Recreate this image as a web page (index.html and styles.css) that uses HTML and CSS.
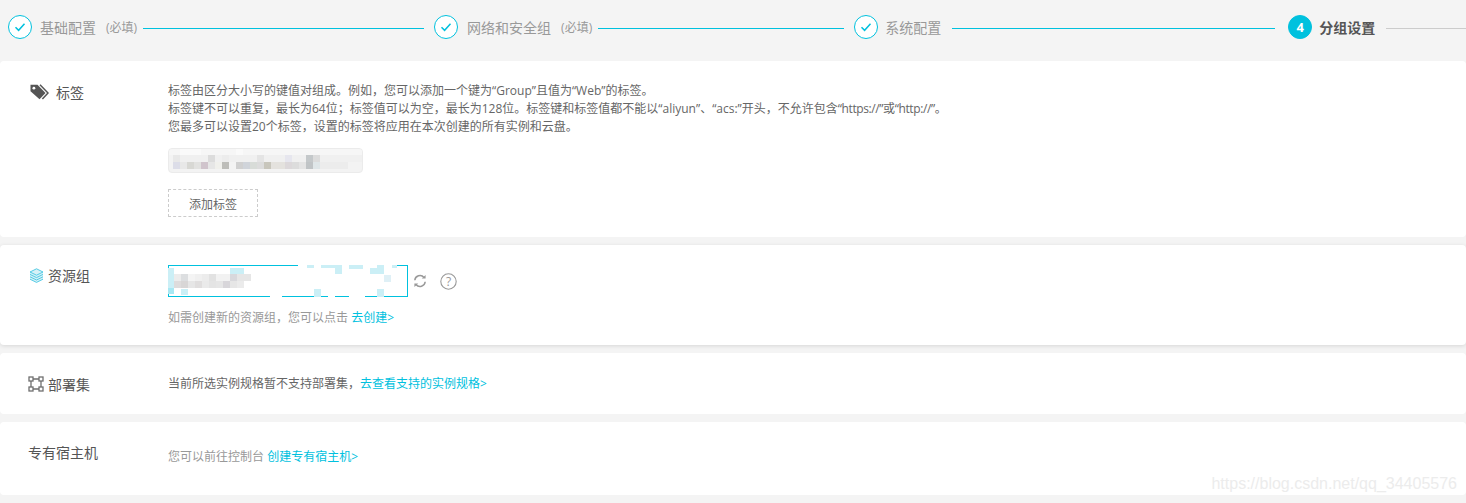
FILE: index.html
```html
<!DOCTYPE html>
<html lang="zh-CN">
<head>
<meta charset="utf-8">
<title>分组设置</title>
<link rel="stylesheet" href="styles.css">
</head>
<body>
<nav class="steps">
  <div class="circle"><svg width="12" height="10" viewBox="0 0 12 10"><path d="M1.5 5.2 4.6 8.3 10.5 1.8" fill="none" stroke="#00c1de" stroke-width="1.5"/></svg></div>
  <span class="step-name">基础配置</span><span class="step-note">(必填)</span><span class="line line-a"></span>
  <div class="circle"><svg width="12" height="10" viewBox="0 0 12 10"><path d="M1.5 5.2 4.6 8.3 10.5 1.8" fill="none" stroke="#00c1de" stroke-width="1.5"/></svg></div>
  <span class="step-name step-name-wide">网络和安全组</span><span class="step-note">(必填)</span><span class="line line-b"></span>
  <div class="circle"><svg width="12" height="10" viewBox="0 0 12 10"><path d="M1.5 5.2 4.6 8.3 10.5 1.8" fill="none" stroke="#00c1de" stroke-width="1.5"/></svg></div>
  <span class="step-name step-name-near">系统配置</span><span class="line line-c"></span>
  <div class="circle circle-on">4</div>
  <span class="step-name step-name-near step-on">分组设置</span><span class="line line-d"></span>
</nav>

<section class="panel panel-tag">
  <h3 class="head"><svg class="ico" width="19" height="16" viewBox="0 0 19 16"><path d="M.5 .8h7l8 8.2-6 6.2L.5 7.2z" fill="#555"/><path d="M10 .8l8 8.2-5.6 6" fill="none" stroke="#555" stroke-width="1.5"/><circle cx="3.9" cy="4.2" r="1.4" fill="#fff"/></svg>标签</h3>
  <div class="body">
    <p class="desc">标签由区分大小写的键值对组成。例如，您可以添加一个键为“Group”且值为“Web”的标签。<br>标签键不可以重复，最长为64位；标签值可以为空，最长为128位。标签键和标签值都不能以“aliyun”、“acs:”开头，不允许包含<span class="tight">“https://”或“http://”</span>。<br>您最多可以设置20个标签，设置的标签将应用在本次创建的所有实例和云盘。</p>
    <div class="tag"><svg width="193" height="23" viewBox="0 0 193 23" shape-rendering="crispEdges">
      <g fill="#f6f6f6"><rect x="0" y="0" width="193" height="6"/></g>
      <g fill="#fafafa"><rect x="11" y="0" width="21" height="6"/><rect x="67" y="0" width="7" height="6"/></g>
      <g fill="#f0f0f0"><rect x="4" y="6" width="189" height="7"/></g>
      <rect x="4" y="6" width="7" height="7" fill="#e8e8e8"/><rect x="39" y="6" width="7" height="7" fill="#dcdcdc"/><rect x="53" y="6" width="7" height="7" fill="#ececec"/><rect x="88" y="6" width="7" height="7" fill="#e4e4e4"/><rect x="116" y="6" width="7" height="7" fill="#e6e6ee"/><rect x="137" y="6" width="7" height="7" fill="#c4c8ca"/><rect x="144" y="6" width="7" height="7" fill="#dcdcdc"/>
      <rect x="4" y="13" width="7" height="7" fill="#dcdde8"/><rect x="11" y="13" width="7" height="7" fill="#e8e8e8"/><rect x="18" y="13" width="7" height="7" fill="#d8d8d4"/><rect x="25" y="13" width="7" height="7" fill="#e2e2e0"/><rect x="32" y="13" width="7" height="7" fill="#d0c4cc"/><rect x="39" y="13" width="7" height="7" fill="#e6e6e6"/><rect x="46" y="13" width="7" height="7" fill="#f0f0ec"/><rect x="53" y="13" width="7" height="7" fill="#bdbdb9"/><rect x="60" y="13" width="7" height="7" fill="#f3f3f3"/><rect x="67" y="13" width="7" height="7" fill="#d0d0d0"/><rect x="74" y="13" width="7" height="7" fill="#d0d4da"/><rect x="81" y="13" width="7" height="7" fill="#d8dcd8"/><rect x="88" y="13" width="7" height="7" fill="#dcdcdc"/><rect x="95" y="13" width="7" height="7" fill="#c8c6bc"/><rect x="102" y="13" width="14" height="7" fill="#e4e2de"/><rect x="116" y="13" width="7" height="7" fill="#dcd8da"/><rect x="123" y="13" width="7" height="7" fill="#dcdcdc"/><rect x="130" y="13" width="7" height="7" fill="#e4e4e4"/><rect x="137" y="13" width="7" height="7" fill="#c0c4c6"/><rect x="144" y="13" width="7" height="7" fill="#dfe6e8"/><rect x="151" y="13" width="28" height="7" fill="#ececec"/>
    </svg></div>
    <button class="add" type="button">添加标签</button>
  </div>
</section>

<section class="panel panel-group">
  <h3 class="head"><svg class="ico" width="15" height="15" viewBox="0 0 15 15"><path d="M7.5 .8 14 4v7.2L7.5 14.4 1 11.2V4z" fill="#d6f1f7"/><path d="M1 4l6.5 3.2L14 4 7.5 .8zM1 6.4l6.5 3.2L14 6.4M1 8.8 7.5 12 14 8.8M1 11.2l6.5 3.2 6.5-3.2" fill="none" stroke="#45c6e2" stroke-width=".9"/></svg>资源组</h3>
  <div class="body">
    <div class="select-row">
      <div class="select"><svg width="240" height="32" viewBox="0 0 240 32" shape-rendering="crispEdges">
        <g fill="#fff"><rect x="130" y="0" width="9" height="1"/><rect x="146" y="0" width="7" height="1"/><rect x="174" y="0" width="7" height="1"/><rect x="195" y="0" width="14" height="1"/><rect x="216" y="0" width="8" height="1"/><rect x="102" y="31" width="12" height="1"/><rect x="160" y="31" width="7" height="1"/><rect x="181" y="31" width="16" height="1"/></g>
        <g fill="#cbeff6"><rect x="0" y="3" width="6" height="20"/><rect x="62" y="3" width="14" height="6"/><rect x="139" y="0" width="7" height="3"/><rect x="153" y="0" width="21" height="3"/><rect x="167" y="3" width="7" height="6"/><rect x="181" y="0" width="14" height="4"/><rect x="209" y="0" width="7" height="3"/><rect x="202" y="3" width="14" height="6"/><rect x="224" y="0" width="5" height="3"/><rect x="146" y="24" width="7" height="8"/><rect x="209" y="24" width="7" height="8"/><rect x="13" y="24" width="7" height="6"/></g>
        <rect x="216" y="10" width="7" height="7" fill="#dff0f6"/><rect x="0" y="23" width="6" height="6" fill="#a8e8f3"/>
        <rect x="6" y="9" width="7" height="7" fill="#ececec"/><rect x="13" y="9" width="7" height="7" fill="#dcdee0"/><rect x="20" y="9" width="7" height="7" fill="#f4f4f4"/><rect x="27" y="9" width="7" height="7" fill="#f0f0f0"/><rect x="34" y="9" width="7" height="7" fill="#ececec"/><rect x="41" y="9" width="7" height="7" fill="#e2e2e2"/><rect x="48" y="9" width="14" height="7" fill="#f2f2f2"/><rect x="62" y="9" width="7" height="7" fill="#d8d8dc"/><rect x="69" y="9" width="14" height="7" fill="#e6e6e6"/>
        <rect x="6" y="16" width="7" height="7" fill="#dedcdc"/><rect x="13" y="16" width="7" height="7" fill="#d8d6d6"/><rect x="20" y="16" width="7" height="7" fill="#e6e6e6"/><rect x="27" y="16" width="7" height="7" fill="#e0dede"/><rect x="34" y="16" width="7" height="7" fill="#eaeaea"/><rect x="41" y="16" width="7" height="7" fill="#e4e4e4"/><rect x="48" y="16" width="7" height="7" fill="#e6e6e6"/><rect x="55" y="16" width="7" height="7" fill="#d8d6da"/><rect x="62" y="16" width="7" height="7" fill="#e6e6e6"/><rect x="69" y="16" width="7" height="7" fill="#ebebeb"/>
      </svg></div>
      <svg class="refresh" width="14" height="14" viewBox="0 0 14 14"><path d="M1.8 6.2A5.2 5.2 0 0 1 11 3.4M12.2 7.8A5.2 5.2 0 0 1 3 10.6" fill="none" stroke="#999" stroke-width="1.5"/><path d="M8.8 4.6h3.8V.9zM5.2 9.4H1.4v3.7z" fill="#999"/></svg>
      <svg class="help" width="17" height="17" viewBox="0 0 17 17"><circle cx="8.5" cy="8.5" r="7.7" fill="none" stroke="#999" stroke-width="1.1"/><text class="help-q" x="8.5" y="12.6" text-anchor="middle">?</text></svg>
    </div>
    <p class="hint hint-group">如需创建新的资源组，您可以点击 <a class="link">去创建&gt;</a></p>
  </div>
</section>

<section class="panel panel-deploy">
  <h3 class="head"><svg class="ico" width="16" height="16" viewBox="0 0 16 16"><g fill="none" stroke="#6f6f6f" stroke-width="1.3"><rect x="1" y="1" width="4" height="4"/><rect x="11" y="1" width="4" height="4"/><rect x="1" y="11" width="4" height="4"/><rect x="11" y="11" width="4" height="4"/><path d="M5 3h6M3 5v6M13 5v6M5 13h6"/></g></svg>部署集</h3>
  <div class="body"><p class="text">当前所选实例规格暂不支持部署集，<a class="link">去查看支持的实例规格&gt;</a></p></div>
</section>

<section class="panel panel-host">
  <h3 class="head">专有宿主机</h3>
  <div class="body"><p class="hint hint-host">您可以前往控制台 <a class="link">创建专有宿主机&gt;</a></p></div>
</section>

<div class="mark">https://blog.csdn.net/qq_34405576</div>
</body>
</html>
```
FILE: styles.css
```css
* { box-sizing: border-box; }
html, body { margin: 0; height: 503px; overflow: hidden; }
body {
  position: relative;
  background: #f4f4f4;
  font-family: "Open Sans", "Noto Sans CJK SC", sans-serif;
  font-size: 12px;
  color: #666;
}
.steps { display: flex; align-items: flex-start; height: 61px; padding: 15px 0 0 8px; }
.circle {
  width: 24px; height: 24px; flex: none;
  display: flex; align-items: center; justify-content: center;
  border: 1px solid #00c1de; border-radius: 50%;
  background: #fff;
}
.circle-on { background: #00c1de; color: #fff; font-weight: 700; font-size: 13px; }
.step-name { margin-left: 8px; font-size: 14px; line-height: 26px; color: #999; white-space: nowrap; }
.step-name-wide { margin-left: 9px; }
.step-name-near { margin-left: 7px; }
.step-on { color: #555; font-weight: 700; }
.step-note { margin-left: 10px; font-size: 12px; line-height: 26px; color: #999; white-space: nowrap; }
.line { height: 1px; margin-top: 13px; background: #00c1de; flex: none; }
.line-a { width: 281px; margin-left: 6px; margin-right: 10px; }
.line-b { width: 246px; margin-left: 6px; margin-right: 10px; }
.line-c { width: 323px; margin-left: 11px; margin-right: 13px; }
.line-d { flex: 1; margin-left: 11px; background: #ccc; }
.panel {
  display: flex; background: #fff; border-radius: 4px;
  margin-bottom: 8px;
}
.panel-tag { height: 176px; padding-top: 21px; }
.panel-group { height: 100px; padding-top: 20px; box-shadow: 0 1px 4px rgba(0,0,0,.12); }
.panel-deploy { height: 61px; padding-top: 21px; }
.panel-host { height: 73px; padding-top: 21px; }
.head {
  display: flex; align-items: center; gap: 4px;
  width: 168px; height: 20px; margin: 0; padding-left: 28px; flex: none;
  font-size: 14px; font-weight: 400; color: #555; white-space: nowrap;
}
.panel-tag .head { padding-left: 30px; gap: 7px; }
.panel-group .head { padding-left: 29px; gap: 4px; }
.panel-host .head { margin-top: -1px; }
.body { flex: 1; }
.desc, .text, .hint { margin: 0; line-height: 18px; color: #666; }
.panel-deploy .text { margin-top: 1px; }
.tight { letter-spacing: -.4px; }
.hint { color: #999; }
.hint-group { margin-top: 12px; }
.hint-host { margin-top: 5px; }
.link { color: #00c1de; }
.tag {
  width: 195px; height: 25px; margin-top: 12px;
  background: #f3f3f3; border: 1px solid #ebebeb; border-radius: 4px; overflow: hidden;
}
.tag svg, .select svg { display: block; }
.add {
  display: block; width: 90px; height: 28px; margin-top: 16px; padding: 1px 0 0;
  font: inherit; color: #666;
  background: #fff; border: 1px dashed #ccc;
}
.select-row { display: flex; align-items: center; height: 32px; }
.select { width: 240px; height: 32px; background-color: #00c1de; position: relative; }
.select::before { content: ""; position: absolute; inset: 1px; background: #fff; }
.select svg { position: absolute; inset: 0; }
.refresh { margin-left: 5px; }
.help { margin-left: 13px; }
.help-q { font-size: 12px; fill: #999; }
.mark {
  position: absolute; right: 9px; top: 475px;
  font-family: "Liberation Sans", sans-serif; font-size: 16px;
  color: #ececec;
}
```
